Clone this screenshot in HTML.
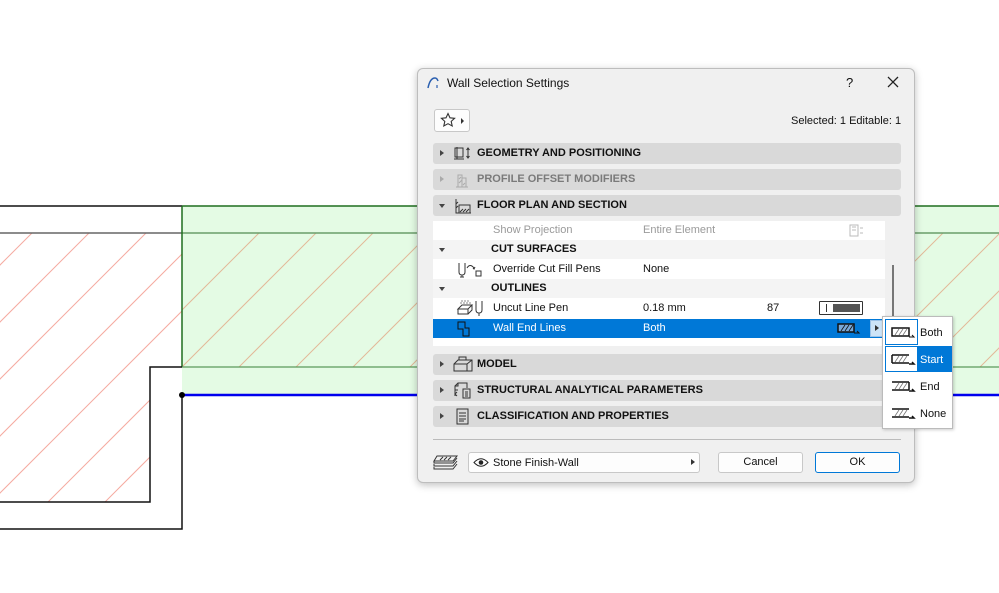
<!DOCTYPE html>
<html><head><meta charset="utf-8"><style>
*{margin:0;padding:0;box-sizing:border-box}
body{width:999px;height:593px;position:relative;overflow:hidden;background:#fff;font-family:"Liberation Sans",sans-serif;font-size:11px;color:#111}
.a{position:absolute}
.dlg{left:417px;top:68px;width:498px;height:415px;background:#f0f0f0;border:1px solid #bdbdbd;border-radius:6px;box-shadow:0 2px 8px rgba(0,0,0,.25)}
.bar{position:absolute;left:15px;width:468px;height:21px;background:#d9d9d9;border-radius:3px;font-weight:bold;font-size:11px;line-height:21px}
.bar .tri{position:absolute;left:7px;top:7px;width:0;height:0;border-left:4px solid #444;border-top:3.5px solid transparent;border-bottom:3.5px solid transparent}
.bar .t{position:absolute;left:44px}
.row{position:absolute;left:15px;width:452px;height:19px;line-height:19px;background:#fff}
.btn{position:absolute;background:#fdfdfd;border:1px solid #c8c8c8;border-radius:3px;text-align:center;line-height:18px}
.pi{position:absolute;left:2px;width:33px;height:26px}
</style></head><body>
<svg class="a" style="left:0;top:0" width="999" height="593">
<defs>
<clipPath id="cl"><path d="M0 233H182V367H150V502H0Z"/></clipPath>
<clipPath id="cg"><rect x="182" y="233" width="817" height="134"/></clipPath>
</defs>
<rect x="182" y="206" width="817" height="189" fill="#e4fbe4"/>
<g clip-path="url(#cl)" stroke="#f5aaa0" stroke-width="1">
<line x1="-300" y1="565" x2="300" y2="-35"/><line x1="-243" y1="565" x2="357" y2="-35"/><line x1="-186" y1="565" x2="414" y2="-35"/><line x1="-129" y1="565" x2="471" y2="-35"/><line x1="-72" y1="565" x2="528" y2="-35"/><line x1="-15" y1="565" x2="585" y2="-35"/><line x1="42" y1="565" x2="642" y2="-35"/><line x1="99" y1="565" x2="699" y2="-35"/><line x1="156" y1="565" x2="756" y2="-35"/><line x1="213" y1="565" x2="813" y2="-35"/><line x1="270" y1="565" x2="870" y2="-35"/>
</g>
<g clip-path="url(#cg)" stroke="#e2b898" stroke-width="1">
<line x1="0" y1="492" x2="500" y2="-8"/><line x1="57" y1="492" x2="557" y2="-8"/><line x1="114" y1="492" x2="614" y2="-8"/><line x1="171" y1="492" x2="671" y2="-8"/><line x1="228" y1="492" x2="728" y2="-8"/><line x1="285" y1="492" x2="785" y2="-8"/><line x1="342" y1="492" x2="842" y2="-8"/><line x1="399" y1="492" x2="899" y2="-8"/><line x1="456" y1="492" x2="956" y2="-8"/><line x1="513" y1="492" x2="1013" y2="-8"/><line x1="570" y1="492" x2="1070" y2="-8"/><line x1="627" y1="492" x2="1127" y2="-8"/><line x1="684" y1="492" x2="1184" y2="-8"/><line x1="741" y1="492" x2="1241" y2="-8"/><line x1="798" y1="492" x2="1298" y2="-8"/><line x1="855" y1="492" x2="1355" y2="-8"/>
</g>
<line x1="0" y1="206" x2="182" y2="206" stroke="#111" stroke-width="1.5"/>
<line x1="182" y1="206" x2="999" y2="206" stroke="#1e6e1e" stroke-width="1.5"/>
<line x1="0" y1="233" x2="182" y2="233" stroke="#666" stroke-width="1.5"/>
<line x1="182" y1="233" x2="999" y2="233" stroke="#6a9e6a" stroke-width="1.5"/>
<line x1="182" y1="206" x2="182" y2="367" stroke="#1e6e1e" stroke-width="1.5"/>
<line x1="182" y1="367" x2="999" y2="367" stroke="#5a9a5a" stroke-width="1.2"/>
<path d="M182 367H150V502H0" fill="none" stroke="#111" stroke-width="1.5"/>
<path d="M182 395V529H0" fill="none" stroke="#111" stroke-width="1.5"/>
<line x1="182" y1="395" x2="999" y2="395" stroke="#0000ee" stroke-width="2.5"/>
<circle cx="182" cy="395" r="3" fill="#000"/>
</svg>

<div class="a dlg">
 <svg class="a" style="left:8px;top:7px" width="14" height="14"><path d="M2 12 Q4 2 9 2 Q11 2 12 5" fill="none" stroke="#2a5fb0" stroke-width="1.5"/><path d="M11 9v3" stroke="#2a5fb0" stroke-width="1.2"/></svg>
 <div class="a" style="left:29px;top:7px;font-size:12px">Wall Selection Settings</div>
 <div class="a" style="left:428px;top:6px;font-size:13px">?</div>
 <svg class="a" style="left:469px;top:7px" width="12" height="12"><path d="M1 1L11 11M11 1L1 11" stroke="#222" stroke-width="1.3"/></svg>
 <div class="btn" style="left:16px;top:40px;width:36px;height:23px;border-radius:3px"></div>
 <svg class="a" style="left:22px;top:43px" width="26" height="18"><path d="M8 1.5l2 4.3 4.6.5-3.4 3.1 1 4.6L8 11.7 3.8 14l1-4.6L1.4 6.3 6 5.8z" fill="none" stroke="#333" stroke-width="1.1"/><path d="M21 6v6l3-3z" fill="#333"/></svg>
 <div class="a" style="left:373px;top:46px">Selected: 1 Editable: 1</div>

 <div class="bar" style="top:74px"><span class="tri"></span><svg class="a" style="left:20px;top:3px" width="20" height="16"><rect x="2" y="2" width="8" height="9" fill="none" stroke="#333"/><path d="M4 1v12h7M1 13h10M15 2v10M13.5 4l1.5-2 1.5 2M13.5 10l1.5 2 1.5-2" fill="none" stroke="#333"/></svg><span class="t">GEOMETRY AND POSITIONING</span></div>
 <div class="bar" style="top:100px;color:#7a7a7a"><span class="tri" style="border-left-color:#aaa"></span><svg class="a" style="left:20px;top:3px" width="20" height="16"><path d="M5 15V3h4v12M9 6h4v9M3 15h12M6 7l2-2M6 11l3-3M10 13l2-2" fill="none" stroke="#aaa"/></svg><span class="t">PROFILE OFFSET MODIFIERS</span></div>
 <div class="bar" style="top:126px"><span class="tri" style="border-left:3.5px solid transparent;border-right:3.5px solid transparent;border-top:4px solid #444;border-bottom:0;top:9px;left:6px"></span><svg class="a" style="left:20px;top:3px" width="20" height="16"><path d="M3 1v14h15M6 15V7h11v8" fill="none" stroke="#333"/><path d="M7 14l3-3M10 14l3-3M13 14l3-3M3 6l2-2M3 10l2-2" stroke="#333"/></svg><span class="t">FLOOR PLAN AND SECTION</span></div>

 <div class="a" style="left:15px;top:152px;width:452px;height:125px;background:#fff"></div>
 <div class="row" style="top:152px;color:#9a9a9a"><span class="a" style="left:60px">Show Projection</span><span class="a" style="left:210px">Entire Element</span><svg class="a" style="left:416px;top:3px" width="16" height="13"><rect x="1" y="1" width="8" height="11" fill="none" stroke="#bbb"/><path d="M3 3h4M3 6h4M11 4h3M11 9h3" stroke="#bbb"/></svg></div>
 <div class="row" style="top:171px;background:#f4f4f4;font-weight:bold"><span class="a" style="left:6px;top:8px;border-left:3.5px solid transparent;border-right:3.5px solid transparent;border-top:4px solid #444"></span><span class="a" style="left:58px">CUT SURFACES</span></div>
 <div class="row" style="top:191px"><svg class="a" style="left:24px;top:2px" width="30" height="16"><path d="M2 1v9q0 3 3 3t3-3V1M5 13v2M3 15h4M10 6q3-5 7 0M16 6l1 1 1-2" fill="none" stroke="#333"/><rect x="19" y="9" width="5" height="5" fill="none" stroke="#333"/></svg><span class="a" style="left:60px">Override Cut Fill Pens</span><span class="a" style="left:210px">None</span></div>
 <div class="row" style="top:210px;background:#f4f4f4;font-weight:bold"><span class="a" style="left:6px;top:8px;border-left:3.5px solid transparent;border-right:3.5px solid transparent;border-top:4px solid #444"></span><span class="a" style="left:58px">OUTLINES</span></div>
 <div class="row" style="top:230px"><svg class="a" style="left:22px;top:1px" width="32" height="17"><path d="M3 9l4-4h10l-4 4zM3 9v5h10V9M13 14l4-4V5" fill="none" stroke="#333"/><path d="M5 3h11M6 1h8" stroke="#888" stroke-dasharray="2 1"/><path d="M21 1v9q0 3 3 3t3-3V1M24 13v3" fill="none" stroke="#333"/></svg><span class="a" style="left:60px">Uncut Line Pen</span><span class="a" style="left:210px">0.18 mm</span><span class="a" style="left:334px">87</span><div class="a" style="left:386px;top:2px;width:44px;height:14px;border:1px solid #333;border-radius:1px"><div class="a" style="left:6px;top:2px;width:1px;height:8px;background:#333"></div><div class="a" style="left:13px;top:2px;width:27px;height:8px;background:#555"></div></div></div>
 <div class="row" style="top:250px;background:#0078d7;color:#fff"><svg class="a" style="left:24px;top:2px" width="14" height="16"><path d="M1 1h7v6h4v8H6V8H1z" fill="none" stroke="#111"/></svg><span class="a" style="left:60px">Wall End Lines</span><span class="a" style="left:210px">Both</span><svg class="a" style="left:404px;top:4px" width="24" height="12"><rect x="1" y="1" width="16" height="8" fill="#79a8d8" stroke="#111" stroke-width="1.5"/><path d="M4 8l4-6M8 8l4-6M12 8l4-6" stroke="#111" stroke-width=".8"/><path d="M17 10h5l-2-2" fill="none" stroke="#111"/></svg></div>
 <div class="a" style="left:452px;top:251px;width:14px;height:17px;background:#cde4f7;border:1px solid #9cc3e8"><span class="a" style="left:4px;top:4px;border-left:4px solid #333;border-top:3.5px solid transparent;border-bottom:3.5px solid transparent"></span></div>
 <div class="a" style="left:474px;top:196px;width:2px;height:56px;background:#777"></div>

 <div class="bar" style="top:285px"><span class="tri"></span><svg class="a" style="left:20px;top:2px" width="20" height="17"><path d="M1 8l4-4h14v11H1zM1 8h13v7M14 8l5-4M6 4V1h7v3" fill="none" stroke="#333"/></svg><span class="t">MODEL</span></div>
 <div class="bar" style="top:311px"><span class="tri"></span><svg class="a" style="left:20px;top:2px" width="20" height="17"><path d="M2 14V4l3-3h9v5M5 1v3H2M5 8H2M4 10l-2 2 2 2" fill="none" stroke="#333"/><rect x="10" y="7" width="7" height="9" fill="none" stroke="#333"/><path d="M12 10h3M12 12h3M12 14h3" stroke="#333"/></svg><span class="t">STRUCTURAL ANALYTICAL PARAMETERS</span></div>
 <div class="bar" style="top:337px"><span class="tri"></span><svg class="a" style="left:20px;top:2px" width="20" height="17"><rect x="4" y="1" width="11" height="15" fill="none" stroke="#333"/><path d="M6 5h7M6 8h7M6 11h7M6 13h5" stroke="#333"/></svg><span class="t">CLASSIFICATION AND PROPERTIES</span></div>

 <div class="a" style="left:15px;top:370px;width:468px;height:1px;background:#bbb"></div>
 <svg class="a" style="left:15px;top:385px" width="26" height="16"><path d="M4 2h20l-4 5H1zM1 7v2h19l4-5M1 10v2h19l4-5M1 13v2h19l4-5" fill="none" stroke="#333"/><path d="M7 6l3-3M11 6l3-3M15 6l3-3" stroke="#333"/></svg>
 <div class="btn" style="left:50px;top:383px;width:232px;height:21px;text-align:left"><svg class="a" style="left:4px;top:4px" width="16" height="11"><path d="M1 5.5Q8-2 15 5.5Q8 13 1 5.5z" fill="none" stroke="#222"/><circle cx="8" cy="5.5" r="2.3" fill="#222"/></svg><span class="a" style="left:24px;top:1px">Stone Finish-Wall</span><span class="a" style="right:4px;top:6px;border-left:4px solid #333;border-top:3.5px solid transparent;border-bottom:3.5px solid transparent"></span></div>
 <div class="btn" style="left:300px;top:383px;width:85px;height:21px">Cancel</div>
 <div class="btn" style="left:397px;top:383px;width:85px;height:21px;border:1px solid #0078d7">OK</div>
</div>

<div class="a" style="left:882px;top:316px;width:71px;height:113px;background:#fff;border:1px solid #bbb;box-shadow:1px 1px 3px rgba(0,0,0,.2)">
 <div class="a" style="left:2px;top:29px;width:67px;height:26px;background:#0078d7"></div>
 <div class="pi" style="top:2px;border:1px solid #0078d7;background:#fff"></div>
 <div class="pi" style="top:29px;border:1px solid #0078d7;background:#fff"></div>
 <svg class="a" style="left:8px;top:10px" width="26" height="100">
  <g fill="none" stroke="#111"><rect x="1" y="1" width="17" height="8" stroke-width="1.5"/><path d="M18 10h5l-2-2"/>
  <path d="M1 28h17M1 36h17M18 37h5l-2-2" stroke-width="1.5"/><path d="M1 28v8" stroke-width="1.5"/>
  <path d="M1 55h17M1 63h17M18 64h5l-2-2M18 55v8" stroke-width="1.5"/>
  <path d="M1 82h17M1 90h17M18 91h5l-2-2" stroke-width="1.5"/></g>
  <g stroke="#777" stroke-width=".8"><path d="M4 8l4-6M8 8l4-6M12 8l4-6M4 35l4-6M8 35l4-6M12 35l4-6M4 62l4-6M8 62l4-6M12 62l4-6M4 89l4-6M8 89l4-6M12 89l4-6"/></g>
 </svg>
 <div class="a" style="left:37px;top:10px">Both</div>
 <div class="a" style="left:37px;top:37px;color:#fff">Start</div>
 <div class="a" style="left:37px;top:64px">End</div>
 <div class="a" style="left:37px;top:91px">None</div>
</div>
</body></html>
